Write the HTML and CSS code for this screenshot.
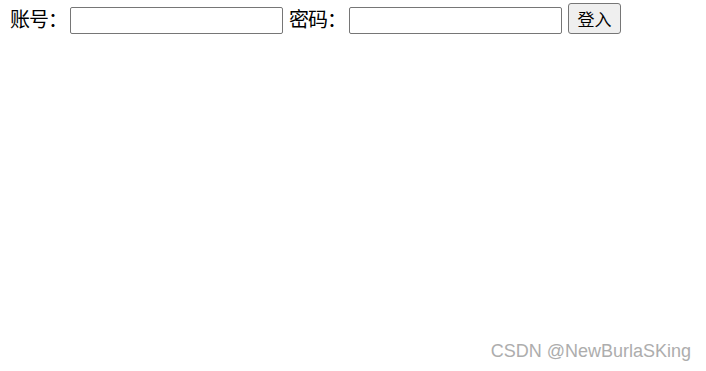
FILE: index.html
```html
<!DOCTYPE html>
<html>
<head>
<meta charset="utf-8">
<link rel="stylesheet" href="styles.css">
</head>
<body>
<form class="login">
  <label class="lbl">账号：</label>
  <input class="field" type="text">
  <label class="lbl">密码：</label>
  <input class="field" type="password">
  <button class="btn" type="button">登入</button>
</form>
<div class="mark">CSDN @NewBurlaSKing</div>
</body>
</html>
```
FILE: styles.css
```css
html, body {
  margin: 0;
  padding: 0;
  background: #fff;
}
body {
  font-family: "Noto Sans CJK SC", "Liberation Sans", sans-serif;
  font-size: 20px;
  color: #000;
  position: relative;
  width: 706px;
  height: 371px;
  overflow: hidden;
}
.login {
  display: flex;
  align-items: center;
  padding: 3px 0 0 10px;
  height: 31px;
}
.lbl {
  line-height: 31px;
  width: 60px;
  letter-spacing: -1px;
}
.field {
  box-sizing: border-box;
  width: 213px;
  height: 27px;
  border: 1px solid #767676;
  border-radius: 2px;
  margin: 0 6px 0 0;
  padding: 0 3px;
  background: #fff;
  margin-top: 3px;
}
.btn {
  box-sizing: border-box;
  width: 53px;
  height: 31px;
  border: 1px solid #767676;
  border-radius: 3px;
  background: #efefef;
  font-family: "Noto Sans CJK SC", sans-serif;
  font-size: 17px;
  color: #000;
  padding: 0;
  margin-top: -1px;
}
.mark {
  position: absolute;
  right: 15px;
  bottom: 9px;
  font-family: "Liberation Sans", sans-serif;
  font-size: 18px;
  color: #adadad;
}
```
